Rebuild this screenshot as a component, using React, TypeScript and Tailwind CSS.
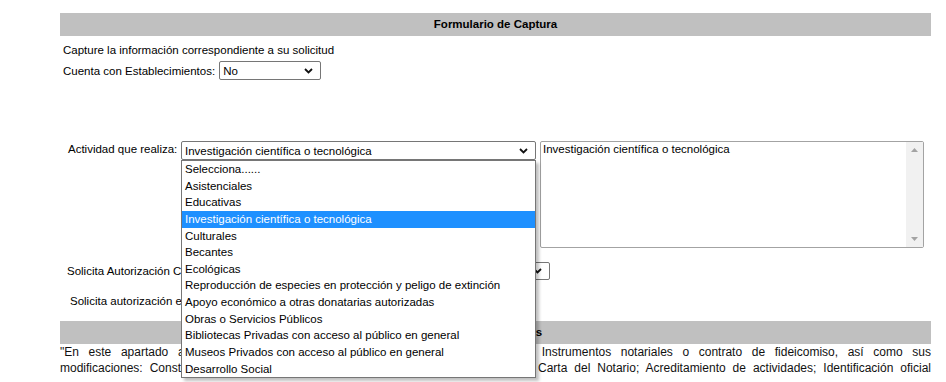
import React from "react";

const ACTIVIDADES = [
  "Selecciona......",
  "Asistenciales",
  "Educativas",
  "Investigación científica o tecnológica",
  "Culturales",
  "Becantes",
  "Ecológicas",
  "Reproducción de especies en protección y peligo de extinción",
  "Apoyo económico a otras donatarias autorizadas",
  "Obras o Servicios Públicos",
  "Bibliotecas Privadas con acceso al público en general",
  "Museos Privados con acceso al público en general",
  "Desarrollo Social",
];

const Chevron = () => (
  <svg width="9" height="6" viewBox="0 0 9 6" className="shrink-0">
    <path d="M1 1l3.5 3.5L8 1" fill="none" stroke="#111" strokeWidth="1.8" />
  </svg>
);

const FakeSelect = ({ value, className }: { value: string; className: string }) => (
  <div
    className={`flex items-center justify-between rounded-[2px] border border-[#767676] bg-white pl-[3px] pr-[7px] leading-[16px] ${className}`}
  >
    <span className="truncate">{value}</span>
    <Chevron />
  </div>
);

export default function App() {
  const selected = 3;

  return (
    <div className="min-h-screen bg-white font-['Liberation_Sans',Arial,sans-serif] text-[11.5px] text-black">
      <div className="ml-[60px] w-[871px] pt-[13px]">
        <div className="flex h-[23px] items-center justify-center bg-[#c0c0c0] font-bold">
          Formulario de Captura
        </div>

        <div className="mt-[6px] pl-[3px] leading-[16px]">
          Capture la información correspondiente a su solicitud
        </div>

        <div className="mt-[3px] flex h-[19px] items-center pl-[3px]">
          <span className="leading-[16px]">Cuenta con Establecimientos:</span>
          <FakeSelect value="No" className="ml-[4px] h-[19px] w-[102px]" />
        </div>

        {/* actividad */}
        <div className="mt-[61px] flex items-start">
          <span className="w-[121px] whitespace-nowrap pl-[8px] leading-[16px]">Actividad que realiza:</span>
          <div className="relative">
            <FakeSelect value={ACTIVIDADES[selected]} className="h-[19px] w-[355px]" />
            <div className="absolute left-0 top-[19px] z-10 w-[355px] border border-[#767676] bg-white shadow-[3px_3px_3px_rgba(0,0,0,0.25)]">
              {ACTIVIDADES.map((a, i) => (
                <div
                  key={a}
                  className={`h-[16.65px] whitespace-nowrap pl-[3px] leading-[16.65px] ${
                    i === selected ? "bg-[#1e90ff] text-white" : ""
                  }`}
                >
                  {a}
                </div>
              ))}
            </div>
          </div>
          <div className="ml-[4px] flex h-[107px] w-[384px] rounded-[2px] border border-[#a3a3a3] bg-white">
            <div className="flex-1 pl-[2px] leading-[14px]">{ACTIVIDADES[selected]}</div>
            <div className="flex w-[17px] flex-col items-center justify-between bg-[#f1f1f1] py-[6px]">
              <svg width="7" height="4" viewBox="0 0 7 4">
                <path d="M0 4L3.5 0 7 4z" fill="#a3a3a3" />
              </svg>
              <svg width="7" height="4" viewBox="0 0 7 4">
                <path d="M0 0L3.5 4 7 0z" fill="#a3a3a3" />
              </svg>
            </div>
          </div>
        </div>

        <div className="mt-[14px] flex h-[18px] items-center">
          <span className="w-[370px] whitespace-nowrap pl-[7px] leading-[16px]">
            Solicita Autorización Con Fines de Ayuda a Otras Donatarias:
          </span>
          <FakeSelect value="No" className="h-[18px] w-[120px]" />
        </div>

        <div className="mt-[13px] whitespace-nowrap pl-[10px] leading-[16px]">
          Solicita autorización en el extranjero:
        </div>

        <div className="mt-[12px] flex h-[23px] items-center justify-center bg-[#c0c0c0] font-bold">
          Archivos Anexos
        </div>

        <div className="text-[12px] leading-[16px] text-[#111]">
          <p className="text-justify [text-align-last:justify]">
            "En este apartado adjunte en formato digital PDF los siguientes documentos: Instrumentos notariales o contrato de fideicomiso, así como sus
          </p>
          <p className="text-justify [text-align-last:justify]">
            modificaciones: Constitutiva y sus reformas; Poder del Representante Legal; RFC; Carta del Notario; Acreditamiento de actividades; Identificación oficial
          </p>
        </div>
      </div>
    </div>
  );
}
